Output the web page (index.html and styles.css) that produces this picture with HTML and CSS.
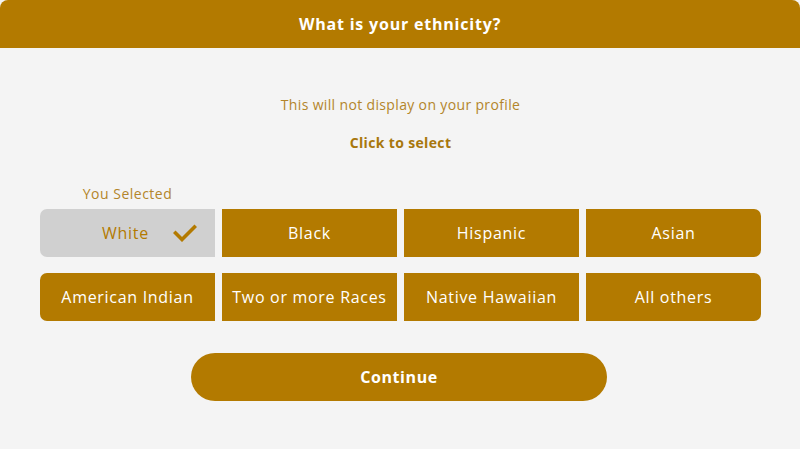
FILE: index.html
```html
<!DOCTYPE html>
<html>
<head>
<meta charset="utf-8">
<link rel="stylesheet" href="styles.css">
</head>
<body>
<div class="modal">
  <div class="header">What is your ethnicity?</div>
  <div class="content">
    <p class="note">This will not display on your profile</p>
    <p class="hint">Click to select</p>
    <div class="label-row"><span class="selected-label">You Selected</span></div>
    <div class="row">
      <button class="opt selected"><span>White</span>
        <svg class="check" width="24" height="18" viewBox="0 0 24 18"><path d="M2.5 9 L9 15.5 L21.5 3" fill="none" stroke="#b37a00" stroke-width="3.6" stroke-linecap="square"/></svg>
      </button>
      <button class="opt">Black</button>
      <button class="opt">Hispanic</button>
      <button class="opt">Asian</button>
    </div>
    <div class="row">
      <button class="opt">American Indian</button>
      <button class="opt">Two or more Races</button>
      <button class="opt">Native Hawaiian</button>
      <button class="opt">All others</button>
    </div>
    <div class="actions"><button class="continue">Continue</button></div>
  </div>
</div>
</body>
</html>
```
FILE: styles.css
```css
html, body {
  margin: 0;
  padding: 0;
  background: #f4f4f4;
  font-family: "Open Sans", "DejaVu Sans", sans-serif;
}
.modal {
  width: 800px;
  height: 449px;
  background: #f4f4f4;
}
.header {
  height: 48px;
  background: #b37a00;
  border-radius: 8px 8px 0 0;
  color: #fff;
  font-weight: 700;
  font-size: 16px;
  letter-spacing: 0.8px;
  display: flex;
  align-items: center;
  justify-content: center;
}
.content {
  padding: 0 39px 0 40px;
}
.note {
  margin: 48px 0 0;
  text-align: center;
  font-size: 14px;
  letter-spacing: 0.35px;
  color: #b3852a;
  line-height: 18px;
}
.hint {
  margin: 20px 0 0;
  text-align: center;
  font-size: 14px;
  letter-spacing: 0.35px;
  font-weight: 700;
  color: #a8770c;
  line-height: 18px;
}
.label-row {
  margin-top: 33px;
  width: 175px;
  display: flex;
  justify-content: center;
  height: 18px;
}
.selected-label {
  font-size: 14px;
  letter-spacing: 0.5px;
  color: #b3852a;
  line-height: 18px;
}
.row {
  display: grid;
  grid-template-columns: repeat(4, 175px);
  gap: 7px;
  margin-top: 6px;
  border-radius: 7px;
  overflow: hidden;
  width: 721px;
}
.row + .row {
  margin-top: 16px;
}
.opt {
  height: 48px;
  border: none;
  margin: 0;
  padding: 0;
  background: #b37a00;
  color: #fff;
  font-family: inherit;
  font-size: 16px;
  letter-spacing: 0.7px;
  display: flex;
  align-items: center;
  justify-content: center;
}
.opt.selected {
  background: #d0d0d0;
  color: #b37a00;
  justify-content: flex-start;
  gap: 24px;
  padding-left: 62px;
}
.check {
  display: block;
}
.actions {
  display: flex;
  justify-content: center;
  margin-top: 32px;
  padding-right: 3px;
}
.continue {
  width: 416px;
  height: 48px;
  border: none;
  border-radius: 24px;
  background: #b37a00;
  color: #fff;
  font-family: inherit;
  font-weight: 700;
  font-size: 16px;
  letter-spacing: 0.6px;
}
```
